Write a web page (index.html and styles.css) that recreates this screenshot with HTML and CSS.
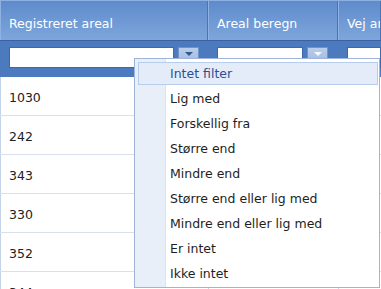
FILE: index.html
```html
<!DOCTYPE html>
<html>
<head>
<meta charset="utf-8">
<link rel="stylesheet" href="styles.css">
</head>
<body>
<div class="grid">
  <div class="hdr">
    <div class="hcell c1">Registreret areal</div>
    <div class="hcell c2">Areal beregn</div>
    <div class="hcell c3">Vej areal</div>
  </div>
  <div class="filters">
    <div class="fcell c1">
      <div class="finput"></div>
      <div class="fbtn active"><span class="tri"></span></div>
    </div>
    <div class="fcell c2">
      <div class="finput"></div>
      <div class="fbtn"><span class="tri"></span></div>
    </div>
    <div class="fcell c3">
      <div class="finput"></div>
    </div>
  </div>
  <div class="rows">
    <div class="row"><div class="cell c1">1030</div><div class="cell c2"></div><div class="cell c3"></div></div>
    <div class="row"><div class="cell c1">242</div><div class="cell c2"></div><div class="cell c3"></div></div>
    <div class="row"><div class="cell c1">343</div><div class="cell c2"></div><div class="cell c3"></div></div>
    <div class="row"><div class="cell c1">330</div><div class="cell c2"></div><div class="cell c3"></div></div>
    <div class="row"><div class="cell c1">352</div><div class="cell c2"></div><div class="cell c3"></div></div>
    <div class="row"><div class="cell c1">344</div><div class="cell c2"></div><div class="cell c3"></div></div>
  </div>
  <div class="menu">
    <div class="item active">Intet filter</div>
    <div class="item">Lig med</div>
    <div class="item">Forskellig fra</div>
    <div class="item">Større end</div>
    <div class="item">Mindre end</div>
    <div class="item">Større end eller lig med</div>
    <div class="item">Mindre end eller lig med</div>
    <div class="item">Er intet</div>
    <div class="item">Ikke intet</div>
  </div>
</div>
</body>
</html>
```
FILE: styles.css
```css
html, body {
  margin: 0;
  padding: 0;
  background: #fff;
  overflow: hidden;
}
body {
  font-family: "DejaVu Sans", Verdana, sans-serif;
  font-size: 12.5px;
  color: #222;
}
.grid {
  position: relative;
  width: 381px;
  height: 289px;
  overflow: hidden;
}
.c1 { width: 208px; flex: none; }
.c2 { width: 130px; flex: none; }
.c3 { flex: 1; min-width: 0; }

.hdr {
  display: flex;
  height: 39px;
  border-top: 1px solid #8eb0e1;
  border-bottom: 1px solid #3a62a2;
  background: linear-gradient(#5e8bcb, #7ea6dc);
}
.hcell {
  box-sizing: border-box;
  display: flex;
  align-items: center;
  padding-left: 9px;
  padding-top: 5px;
  color: #fff;
  white-space: nowrap;
  overflow: hidden;
  border-right: 1px solid #4b74b4;
  box-shadow: inset 1px 0 #90b2e2;
}

.filters {
  display: flex;
  height: 36px;
  background: #4b7abe;
}
.fcell {
  box-sizing: border-box;
  display: flex;
  gap: 4px;
  padding: 6px 0 0 9px;
}
.finput {
  box-sizing: border-box;
  height: 21px;
  background: #fff;
  border: 1px solid #3f68a9;
}
.c1 .finput { width: 165px; }
.c2 .finput { width: 86px; }
.c3 .finput { flex: 1; }
.fbtn {
  box-sizing: border-box;
  width: 21px;
  height: 21px;
  border: 1px solid #6f92c7;
  background: linear-gradient(#b9cdeb, #97b3de);
  display: flex;
  justify-content: center;
  padding-top: 4px;
}
.tri {
  width: 0;
  height: 0;
  border-left: 4px solid transparent;
  border-right: 4px solid transparent;
  border-top: 4px solid #f4f8ff;
}
.fbtn.active .tri { border-top-color: #35598f; }

.rows { display: flex; flex-direction: column; }
.row {
  display: flex;
  height: 38px;
  border-bottom: 1px solid #d7e0ec;
}
.cell {
  box-sizing: border-box;
  display: flex;
  align-items: center;
  padding-left: 8px;
  padding-top: 2px;
  border-left: 1px solid #c3d3ea;
}

.menu {
  position: absolute;
  left: 134px;
  top: 58px;
  width: 246px;
  box-sizing: border-box;
  border: 1px solid #9fb4d8;
  padding: 2px 1px 1px 3px;
  display: flex;
  flex-direction: column;
  gap: 2px;
  background: linear-gradient(to right, #e9eff9 0 30px, #d9e3f3 30px 31px, #fff 31px);
}
.item {
  box-sizing: border-box;
  height: 23px;
  padding-left: 31px;
  display: flex;
  align-items: center;
  border: 1px solid transparent;
  color: #1e1e1e;
  white-space: nowrap;
}
.item:first-child { margin-top: 1px; }
.item:last-child { margin-bottom: 1px; }
.item.active {
  background: #e4ecf9;
  border-color: #b8cceb;
  color: #2b4f93;
}
```
